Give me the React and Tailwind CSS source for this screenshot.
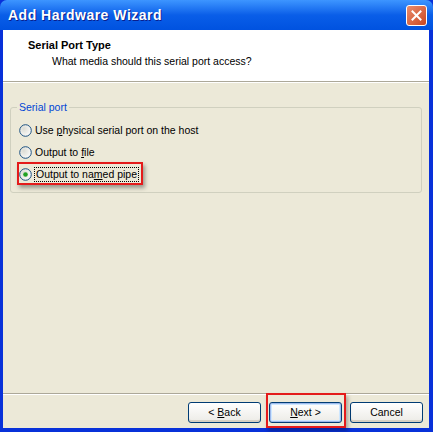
import React from "react";

const font = { fontFamily: '"Liberation Sans", Arial, sans-serif' };

function Radio({ checked }) {
  return (
    <svg width="13" height="13" viewBox="0 0 13 13" className="shrink-0">
      <defs>
        <radialGradient id="rg" cx="0.35" cy="0.35" r="0.8">
          <stop offset="0" stopColor="#dcdcd4" />
          <stop offset="1" stopColor="#ffffff" />
        </radialGradient>
      </defs>
      <circle cx="6.5" cy="6.5" r="5.8" fill="url(#rg)" stroke="#1c5180" strokeWidth="1" />
      {checked && <circle cx="6.5" cy="6.5" r="2.3" fill="#21a121" />}
    </svg>
  );
}

function Btn({ children, def }) {
  return (
    <div
      className={`w-[73px] h-[21px] rounded-[3px] border border-[#003c74] flex items-center justify-center text-[10.5px] text-black bg-gradient-to-b from-[#ffffff] to-[#ecebe6] ${def ? "shadow-[inset_0_0_0_1px_#9db9eb,inset_0_0_0_2px_#cee7ff]" : "shadow-[inset_0_-2px_0_#d6d0c5]"}`}
    >
      <span className="whitespace-pre">{children}</span>
    </div>
  );
}

export default function App() {
  return (
    <div className="w-[433px] h-[432px] bg-[#0831d9] flex flex-col" style={font}>
      <div className="h-[30px] rounded-t-[7px] bg-gradient-to-b from-[#3d95ff] via-[#0a5ee8] to-[#0052e0] flex items-center pl-[8px] pr-[6px] shrink-0">
        <span className="text-white font-bold text-[14px] tracking-[0.5px] [text-shadow:1px_1px_0_#0a1e8c]">Add Hardware Wizard</span>
        <div className="ml-auto w-[21px] h-[21px] rounded-[3px] border border-white bg-gradient-to-br from-[#ea8c6c] to-[#c9461f] flex items-center justify-center">
          <svg width="11" height="11" viewBox="0 0 11 11">
            <path d="M1.5 1.5 L9.5 9.5 M9.5 1.5 L1.5 9.5" stroke="white" strokeWidth="2" strokeLinecap="square" />
          </svg>
        </div>
      </div>
      <div className="flex-1 ml-[3px] mr-[4px] mb-[4px] bg-[#ece9d8] flex flex-col min-h-0">
        <div className="h-[52px] bg-white border-b border-[#aca899] flex flex-col pl-[25px] pt-[8px] shrink-0">
          <div className="text-[11px] font-bold text-black leading-[14px]">Serial Port Type</div>
          <div className="text-[10.5px] text-black leading-[14px] pl-[24px] pt-[2px]">What media should this serial port access?</div>
        </div>
        <div className="border-t border-white flex-1 flex flex-col">
          <div className="px-[7px] pt-[24px]">
            <div className="relative border border-[#d0d0bf] rounded-[3px] h-[86px] pt-[16px] pl-[8px]">
              <span className="absolute -top-[8px] left-[6px] px-[2px] bg-[#ece9d8] text-[10.5px] text-[#0046d5] leading-[14px]">Serial port</span>
              <div className="flex flex-col gap-[9px]">
                <div className="flex items-center gap-[3px] h-[13px] text-[10.5px]">
                  <Radio />
                  <span>Use <u>p</u>hysical serial port on the host</span>
                </div>
                <div className="flex items-center gap-[3px] h-[13px] text-[10.5px]">
                  <Radio />
                  <span>Output to <u>f</u>ile</span>
                </div>
                <div className="relative flex items-center gap-[3px] h-[13px] text-[10.5px]">
                  <Radio checked />
                  <span className="outline outline-1 outline-dotted outline-black px-[1px] leading-[13px]">Output to na<u>m</u>ed pipe</span>
                  <div className="absolute -left-[2px] -top-[6px] w-[126px] h-[23px] border-2 border-[#e41b1b] shadow-[2px_3px_4px_rgba(0,0,0,0.35)]" />
                </div>
              </div>
            </div>
          </div>
          <div className="flex-1" />
          <div className="border-t border-[#aca899] border-b border-b-white" />
          <div className="flex justify-end gap-[8px] pt-[7px] pb-[5px] pr-[6px]">
            <Btn>&lt; <u>B</u>ack</Btn>
            <div className="relative">
              <Btn def><u>N</u>ext &gt;</Btn>
              <div className="absolute -left-[3px] -top-[9px] w-[80px] h-[35px] border-2 border-[#e41b1b] shadow-[2px_3px_4px_rgba(0,0,0,0.3)]" />
            </div>
            <Btn>Cancel</Btn>
          </div>
        </div>
      </div>
    </div>
  );
}
